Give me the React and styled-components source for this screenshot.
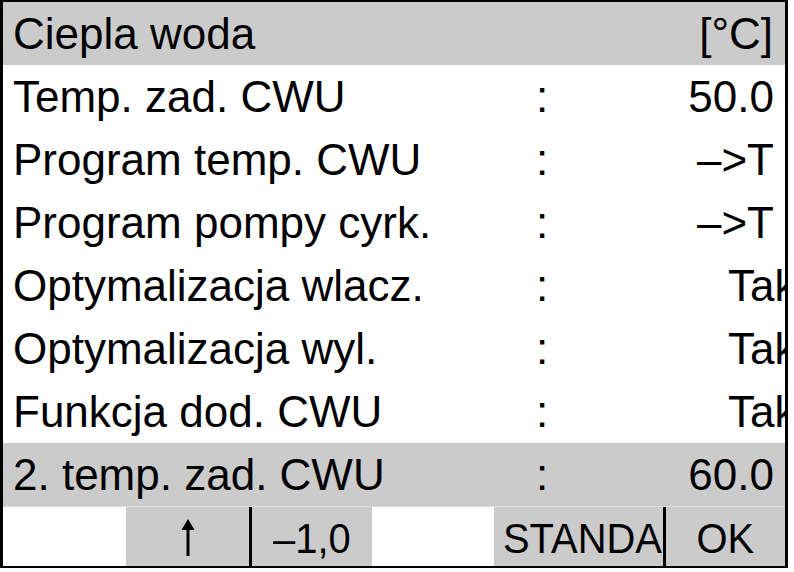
import React from 'react'
import styled, { createGlobalStyle } from 'styled-components'

const GlobalStyle = createGlobalStyle`
  html, body {
    margin: 0;
    padding: 0;
    background: #fff;
  }
  body {
    font-family: 'Liberation Sans', Arial, sans-serif;
    color: #000;
  }
`

const Screen = styled.div`
  width: 782px;
  border-style: solid;
  border-color: #000;
  border-width: 2px 3px 2px 3px;
  background: #fff;
  overflow: hidden;
`

const Row = styled.div`
  display: grid;
  grid-template-columns: 527px 60px 1fr;
  height: 63px;
  line-height: 63px;
  font-size: 44px;
  background: ${(p) => (p.$active ? '#cbcbcb' : '#fff')};
  overflow: hidden;
  white-space: nowrap;
`

const Header = styled.div`
  display: flex;
  justify-content: space-between;
  height: 63px;
  line-height: 63px;
  font-size: 44px;
  padding: 0 12px 0 10px;
  background: #cbcbcb;
`

const Label = styled.span`
  padding-left: 10px;
`

const Colon = styled.span`
  padding-left: 6px;
`

const Value = styled.span`
  text-align: ${(p) => (p.$spill ? 'left' : 'right')};
  padding: ${(p) => (p.$spill ? '0 0 0 138px' : '0 11px 0 0')};
  overflow: hidden;
`

const Keys = styled.div`
  display: grid;
  grid-template-columns: 123px 123px 123px 122px 169px 1fr;
  height: 60px;
  border-top: 1px solid #dedede;
  box-sizing: border-box;
`

const Key = styled.div`
  display: flex;
  align-items: center;
  justify-content: ${(p) => (p.$left ? 'flex-start' : 'center')};
  padding-left: ${(p) => (p.$left ? '9px' : '0')};
  background: ${(p) => (p.$blank ? '#fff' : '#cbcbcb')};
  border-left: ${(p) => (p.$divider ? '3px solid #000' : 'none')};
  overflow: visible;
  white-space: nowrap;
  font-size: 42px;
  line-height: 1;
`

const KeyText = styled.span`
  display: inline-block;
  transform: scaleX(0.95);
  transform-origin: ${(p) => (p.$left ? 'left center' : 'center')};
  padding-top: 4px;
`

// softkey arrow: thin shaft with a filled head
const UpArrow = () => (
  <svg width="16" height="42" viewBox="0 0 16 42">
    <path d="M8 40 V6" stroke="#000" strokeWidth="3" fill="none" />
    <path d="M1.5 14 L8 3 L14.5 14 Z" fill="#000" />
  </svg>
)

const rows = [
  { label: 'Temp. zad. CWU', value: '50.0' },
  { label: 'Program temp. CWU', value: '–>T' },
  { label: 'Program pompy cyrk.', value: '–>T' },
  { label: 'Optymalizacja wlacz.', value: 'Tak', spill: true },
  { label: 'Optymalizacja wyl.', value: 'Tak', spill: true },
  { label: 'Funkcja dod. CWU', value: 'Tak', spill: true },
  { label: '2. temp. zad. CWU', value: '60.0', active: true },
]

const App = () => {
  return (
    <>
      <GlobalStyle />
      <Screen>
        <Header>
          <span>Ciepla woda</span>
          <span>[°C]</span>
        </Header>
        {rows.map((r) => (
          <Row key={r.label} $active={r.active}>
            <Label>{r.label}</Label>
            <Colon>:</Colon>
            <Value $spill={r.spill}>{r.value}</Value>
          </Row>
        ))}
        <Keys>
          <Key $blank />
          <Key>
            <UpArrow />
          </Key>
          <Key $divider>
            <KeyText>–1,0</KeyText>
          </Key>
          <Key $blank />
          <Key $left>
            <KeyText $left>STANDA</KeyText>
          </Key>
          <Key $divider>
            <KeyText>OK</KeyText>
          </Key>
        </Keys>
      </Screen>
    </>
  )
}

export default App
